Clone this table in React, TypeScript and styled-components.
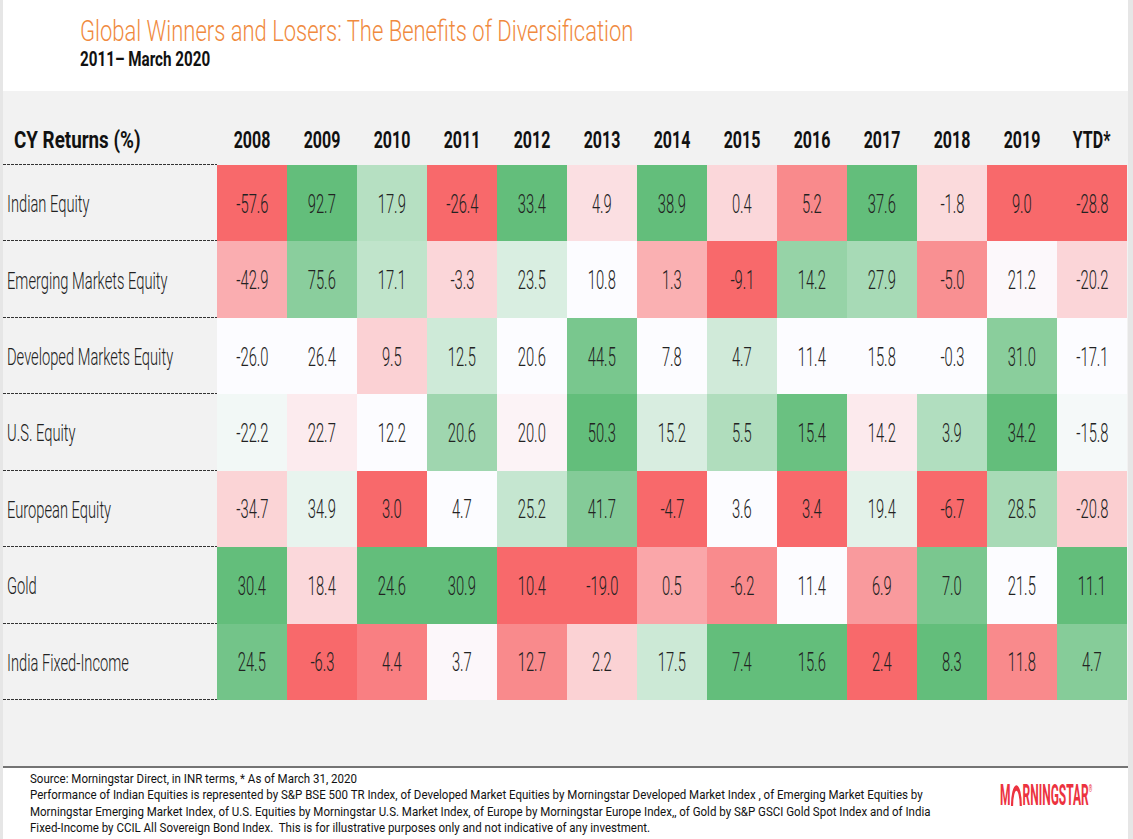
import React from 'react';
import styled, { createGlobalStyle } from 'styled-components';

const GlobalStyle = createGlobalStyle`
  html, body {
    margin: 0;
    padding: 0;
  }
  body {
    background: #e6e6e6;
    font-family: Roboto, "Liberation Sans", sans-serif;
    color: #222;
    overflow: hidden;
  }
`;

const years = ['2008', '2009', '2010', '2011', '2012', '2013', '2014', '2015', '2016', '2017', '2018', '2019', 'YTD*'];

const rows = [
  { name: 'Indian Equity', values: [-57.6, 92.7, 17.9, -26.4, 33.4, 4.9, 38.9, 0.4, 5.2, 37.6, -1.8, 9.0, -28.8] },
  { name: 'Emerging Markets Equity', values: [-42.9, 75.6, 17.1, -3.3, 23.5, 10.8, 1.3, -9.1, 14.2, 27.9, -5.0, 21.2, -20.2] },
  { name: 'Developed Markets Equity', values: [-26.0, 26.4, 9.5, 12.5, 20.6, 44.5, 7.8, 4.7, 11.4, 15.8, -0.3, 31.0, -17.1] },
  { name: 'U.S. Equity', values: [-22.2, 22.7, 12.2, 20.6, 20.0, 50.3, 15.2, 5.5, 15.4, 14.2, 3.9, 34.2, -15.8] },
  { name: 'European Equity', values: [-34.7, 34.9, 3.0, 4.7, 25.2, 41.7, -4.7, 3.6, 3.4, 19.4, -6.7, 28.5, -20.8] },
  { name: 'Gold', values: [30.4, 18.4, 24.6, 30.9, 10.4, -19.0, 0.5, -6.2, 11.4, 6.9, 7.0, 21.5, 11.1] },
  { name: 'India Fixed-Income', values: [24.5, -6.3, 4.4, 3.7, 12.7, 2.2, 17.5, 7.4, 15.6, 2.4, 8.3, 11.8, 4.7] },
];

// excel style 3 colour scale, per column
const RED = [248, 105, 107];
const WHITE = [252, 252, 255];
const GREEN = [99, 190, 123];

const mix = (a: number[], b: number[], t: number) =>
  `rgb(${a.map((v, i) => Math.round(v + (b[i] - v) * t)).join(',')})`;

const scaleColour = (v: number, col: number[]) => {
  const s = [...col].sort((a, b) => a - b);
  const rank = (s.length - 1) * 0.5;
  const lo = Math.floor(rank);
  const mid = s[lo] + (s[Math.ceil(rank)] - s[lo]) * (rank - lo);
  const min = s[0];
  const max = s[s.length - 1];
  if (v <= mid) return mix(RED, WHITE, mid === min ? 1 : (v - min) / (mid - min));
  return mix(WHITE, GREEN, (v - mid) / (max - mid));
};

const App = () => {
  return (
    <>
      <GlobalStyle />
      <Sheet>
        <Header>
          <Title>
            <Squeeze $k={0.733}>Global Winners and Losers: The Benefits of Diversification</Squeeze>
          </Title>
          <Subtitle>
            <Squeeze $k={0.76}>2011– March 2020</Squeeze>
          </Subtitle>
        </Header>

        <Panel>
          <Table>
            <HeadLabel>
              <Squeeze $k={0.8}>CY Returns (%)</Squeeze>
            </HeadLabel>
            {years.map((y) => (
              <HeadYear key={y}>
                <Squeeze $k={0.68} $center>
                  {y}
                </Squeeze>
              </HeadYear>
            ))}
            {rows.map((r) => (
              <React.Fragment key={r.name}>
                <RowLabel>
                  <Squeeze $k={0.625}>{r.name}</Squeeze>
                </RowLabel>
                {r.values.map((v, j) => (
                  <Cell key={j} $bg={scaleColour(v, rows.map((x) => x.values[j]))}>
                    <Squeeze $k={0.59} $center>
                      {v.toFixed(1)}
                    </Squeeze>
                  </Cell>
                ))}
              </React.Fragment>
            ))}
          </Table>
        </Panel>

        <Footer>
          <FooterText>
            <Squeeze $k={0.886}>
              Source: Morningstar Direct, in INR terms, * As of March 31, 2020
              <br />
              Performance of Indian Equities is represented by S&amp;P BSE 500 TR Index, of Developed Market Equities by
              Morningstar Developed Market Index , of Emerging Market Equities by
              <br />
              Morningstar Emerging Market Index, of U.S. Equities by Morningstar U.S. Market Index, of Europe by
              Morningstar Europe Index,, of Gold by S&amp;P GSCI Gold Spot Index and of India
              <br />
              Fixed-Income by CCIL All Sovereign Bond Index.&nbsp; This is for illustrative purposes only and not
              indicative of any investment.
            </Squeeze>
          </FooterText>
          <Logo>
            <Squeeze $k={0.4}>
              M
              <svg width="30" height="22" viewBox="0 0 30 22">
                <path d="M4 22 A11 18 0 0 1 26 22" fill="none" stroke="#ec3340" strokeWidth="5.5" />
              </svg>
              RNINGSTAR<Reg>®</Reg>
            </Squeeze>
          </Logo>
        </Footer>
      </Sheet>
    </>
  );
};

const Squeeze = styled.span<{ $k: number; $center?: boolean }>`
  display: inline-block;
  white-space: nowrap;
  transform: scaleX(${(p) => p.$k});
  transform-origin: ${(p) => (p.$center ? 'center' : 'left')} center;
`;

const Sheet = styled.div`
  width: 1125px;
  margin-left: 3px;
  background: #ffffff;
  overflow: hidden;
`;

const Header = styled.div`
  height: 91px;
  box-sizing: border-box;
  padding: 13px 0 0 77px;
`;

const Title = styled.div`
  font-size: 30px;
  font-weight: 300;
  line-height: 36px;
  color: #f08a3e;
`;

const Subtitle = styled.div`
  font-size: 20px;
  font-weight: 700;
  line-height: 20px;
  color: #111;
`;

const Panel = styled.div`
  height: 675px;
  background: #f2f2f2;
  border-bottom: 2px solid #747474;
`;

const Table = styled.div`
  display: grid;
  grid-template-columns: 214px repeat(13, 70px);
  grid-template-rows: 74px repeat(7, 76.43px);
`;

const dashed = `
  background-image: repeating-linear-gradient(to right, #333 0 3px, transparent 3px 4px);
  background-size: 100% 1px;
  background-position: left bottom;
  background-repeat: no-repeat;
`;

const HeadLabel = styled.div`
  display: flex;
  align-items: flex-end;
  padding: 0 0 11px 11px;
  font-size: 23.5px;
  font-weight: 700;
  color: #111;
  ${dashed}
`;

const HeadYear = styled.div`
  display: flex;
  align-items: flex-end;
  justify-content: center;
  padding-bottom: 11px;
  font-size: 23.5px;
  font-weight: 700;
  color: #111;
`;

const RowLabel = styled.div`
  display: flex;
  align-items: center;
  padding-left: 4px;
  padding-top: 2px;
  font-size: 23.5px;
  font-weight: 300;
  ${dashed}
`;

const Cell = styled.div<{ $bg: string }>`
  display: flex;
  align-items: center;
  justify-content: center;
  padding-top: 2px;
  background: ${(p) => p.$bg};
  font-size: 25px;
  font-weight: 300;
`;

const Footer = styled.div`
  display: flex;
  height: 71px;
  box-sizing: border-box;
  padding: 3px 0 0 27px;
`;

const FooterText = styled.div`
  width: 960px;
  flex-shrink: 0;
  font-size: 13px;
  line-height: 16.3px;
  color: #111;
`;

const Logo = styled.div`
  width: 100px;
  margin: 6px 0 0 10px;
  font-size: 30px;
  font-weight: 700;
  line-height: 24px;
  color: #ec3340;
  svg {
    vertical-align: -1px;
  }
`;

const Reg = styled.span`
  font-size: 11px;
  vertical-align: 13px;
`;

export default App;
